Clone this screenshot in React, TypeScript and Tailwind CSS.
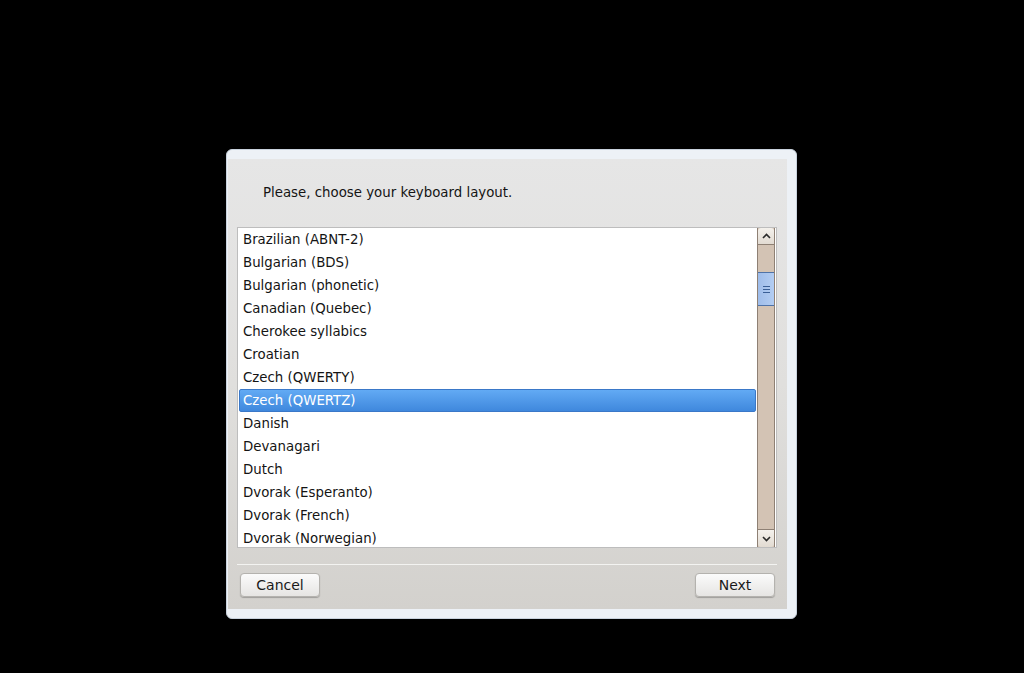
const layouts = [
  "Brazilian (ABNT-2)",
  "Bulgarian (BDS)",
  "Bulgarian (phonetic)",
  "Canadian (Quebec)",
  "Cherokee syllabics",
  "Croatian",
  "Czech (QWERTY)",
  "Czech (QWERTZ)",
  "Danish",
  "Devanagari",
  "Dutch",
  "Dvorak (Esperanto)",
  "Dvorak (French)",
  "Dvorak (Norwegian)",
];

const selected = "Czech (QWERTZ)";

function Arrow({ up }: { up?: boolean }) {
  return (
    <svg width="9" height="6" viewBox="0 0 9 6" className="block">
      <path
        d={up ? "M1 5 L4.5 1.5 L8 5" : "M1 1 L4.5 4.5 L8 1"}
        fill="none"
        stroke="#2a2a2a"
        strokeWidth="1.6"
      />
    </svg>
  );
}

function Scrollbar() {
  return (
    <div className="flex w-[18px] flex-col border-x border-[#8e8074] bg-[#d3c3b4]">
      <div className="flex h-[17px] items-center justify-center rounded-t-[3px] border-b border-[#8e8074] bg-gradient-to-b from-[#f4f1ec] to-[#e2dbd2]">
        <Arrow up />
      </div>
      <div className="h-[27px]" />
      <div className="flex h-[34px] flex-col items-center justify-center gap-[2px] border-y border-[#4f73a8] bg-gradient-to-r from-[#9fbdea] to-[#b3cdf2]">
        <div className="h-px w-[7px] bg-[#3a5f96]" />
        <div className="h-px w-[7px] bg-[#3a5f96]" />
        <div className="h-px w-[7px] bg-[#3a5f96]" />
      </div>
      <div className="flex-1" />
      <div className="flex h-[18px] items-center justify-center rounded-b-[3px] border-t border-[#8e8074] bg-gradient-to-b from-[#f4f1ec] to-[#e2dbd2]">
        <Arrow />
      </div>
    </div>
  );
}

function Button({ label }: { label: string }) {
  return (
    <button className="h-[24px] w-[80px] rounded-[4px] border border-[#b4b2ae] bg-gradient-to-b from-[#fbfbfb] to-[#e6e5e3] text-[14px] leading-none text-[#1a1a1a] shadow-[0_1px_1px_rgba(0,0,0,0.25)]">
      {label}
    </button>
  );
}

export default function App() {
  return (
    <div
      className="flex h-[673px] w-[1024px] justify-center bg-black pr-px pt-[149px]"
      style={{ fontFamily: '"DejaVu Sans", "Liberation Sans", sans-serif' }}
    >
      <div className="h-[470px] w-[571px] rounded-[6px] border border-[#c9d2dd] bg-[#edf1f6] pb-[9px] pl-[1px] pr-[9px] pt-[9px]">
        <div className="flex h-full flex-col bg-gradient-to-b from-[#e6e6e6] via-[#e0dfdd] to-[#d3d1cd]">
          <div className="h-[68px] pl-[35px] pt-[26px] text-[13.33px] leading-[16px] text-[#141414]">
            Please, choose your keyboard layout.
          </div>

          <div className="ml-[9px] mr-[10px] flex h-[321px] border border-[#bdbdbd] bg-white">
            <div className="flex-1 overflow-hidden">
              {layouts.map((name) =>
                name === selected ? (
                  <div
                    key={name}
                    className="mx-px flex h-[23px] items-center rounded-[2px] border border-[#3a78c8] bg-gradient-to-b from-[#62aaf4] to-[#3f88dd] pl-[3px] text-[13.33px] text-white"
                  >
                    {name}
                  </div>
                ) : (
                  <div
                    key={name}
                    className="flex h-[23px] items-center pl-[5px] text-[13.33px] text-[#141414]"
                  >
                    {name}
                  </div>
                )
              )}
            </div>
            <Scrollbar />
            <div className="w-px" />
          </div>

          <div className="ml-[9px] mr-[10px] mt-[16px] h-px bg-[#f3f3f1]" />

          <div className="ml-[12px] mr-[12px] mt-[8px] flex justify-between">
            <Button label="Cancel" />
            <Button label="Next" />
          </div>
        </div>
      </div>
    </div>
  );
}
